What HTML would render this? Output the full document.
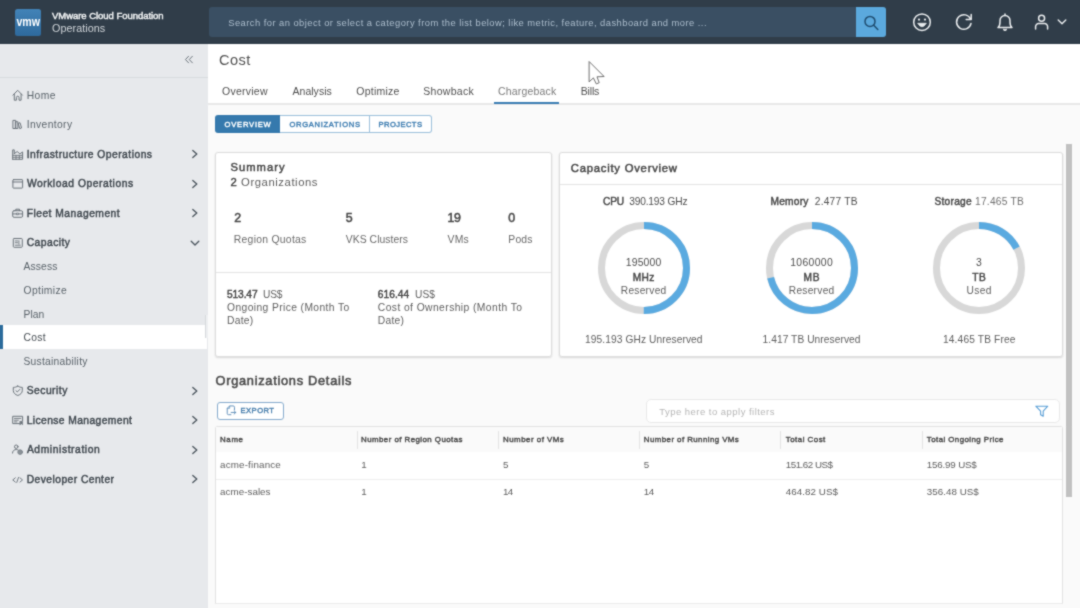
<!DOCTYPE html>
<html lang="en">
<head>
<meta charset="utf-8">
<title>VMware Cloud Foundation Operations - Cost</title>
<style>
*{box-sizing:border-box;margin:0;padding:0}
html,body{width:1080px;height:608px;overflow:hidden;background:#fafafa}
body{font-family:"Liberation Sans",sans-serif;color:#565656;font-size:11px;position:relative}
.t{position:absolute;white-space:nowrap;line-height:20px;height:20px}
.b{font-weight:bold}
.t b{font-weight:normal;-webkit-text-stroke:0.42px currentColor}
.a{position:absolute}
svg{position:absolute;overflow:visible}
#hdr{left:-8px;top:-8px;width:1096px;height:52px;background:#303d49}
#logo{left:15px;top:9px;width:26px;height:26.5px;border-radius:2.5px;background:linear-gradient(180deg,#4283b7 0%,#2e6a9d 100%)}
#search{left:209px;top:7px;width:677px;height:30px;border-radius:3px;background:#3a4f63}
#sbtn{left:856px;top:7px;width:30px;height:30px;border-radius:0 3px 3px 0;background:#5ba9dd}
#side{left:-8px;top:44px;width:216px;height:572px;background:#e7e9ec}
#sideline{left:-8px;top:77px;width:216px;height:1px;background:#d8dbde}
#sel{left:-8px;top:325px;width:215px;height:24px;background:#fff}
#selbar{left:-8px;top:325px;width:10.5px;height:24px;background:#2c6c9c}
#top{left:208px;top:44px;width:880px;height:60px;background:#fff}
#tabline{left:208px;top:103px;width:880px;height:2px;background:#e8e8e8}
#tabsel{left:494px;top:102px;width:65px;height:2px;background:#3a7db3}
.card{position:absolute;background:#fff;border:1px solid #dcdcdc;border-radius:3px;box-shadow:0 1px 2px rgba(0,0,0,.13)}
.hl{position:absolute;height:1px;background:#e4e4e4}
.vl{position:absolute;width:1px;background:#e4e4e4}
#bg1{left:215px;top:115px;width:65.5px;height:18px;background:#3579ad;border-radius:3px 0 0 3px}
#bg2{left:280px;top:115px;width:152px;height:18px;background:#fff;border:1px solid #9cc0db;border-left:0;border-radius:0 3px 3px 0}
#bg3{left:369px;top:115.5px;width:1px;height:17px;background:#9cc0db}
#exp{left:216.5px;top:402px;width:67.5px;height:18px;border:1px solid #86abcd;border-radius:3px;background:#fff}
#filt{left:646px;top:399px;width:413.5px;height:23.5px;border:1px solid #e9e9e9;border-radius:5px;background:#fff}
#tbl{left:215px;top:426px;width:848px;height:178px;border:1px solid #e2e2e2;border-bottom-color:#ececec;border-radius:3px 3px 0 0;background:#fff}
#hand{left:205px;top:315px;width:3px;height:23px;background:#eef0f2;border-left:1px solid #d6d9dc}
#thead{left:216px;top:427px;width:846px;height:24.5px;background:#fafafa}
#scr{left:1066px;top:144px;width:6px;height:353px;background:#c1c1c1}
#track{left:1063px;top:427px;width:25px;height:189px;background:#fafafa}
#wrap{position:absolute;left:0;top:0;width:1080px;height:608px;filter:url(#soft)}
</style>
</head>
<body>
<svg width="0" height="0" style="position:absolute;left:0;top:0"><defs><filter id="soft" x="-2%" y="-2%" width="104%" height="104%" color-interpolation-filters="sRGB"><feConvolveMatrix order="3" kernelMatrix="0.4 1 0.4 1 5 1 0.4 1 0.4" divisor="10.6" edgeMode="duplicate" preserveAlpha="false"/></filter></defs></svg>
<div id="wrap">

<div class="a" id="hdr"></div>
<div class="a" id="logo"></div>
<div class="a" id="search"></div>
<div class="a" id="sbtn"></div>
<!-- header icons -->
<svg style="left:856px;top:7px" width="30" height="30" viewBox="0 0 30 30" fill="none" stroke="#1f4d70" stroke-width="1.5" stroke-linecap="round"><circle cx="14" cy="14.4" r="5"/><path d="M17.7 18.2 L21.8 22.4"/></svg>
<svg style="left:911px;top:11px" width="22" height="22" viewBox="0 0 22 22" fill="none" stroke="#e9ecee" stroke-width="1.5"><circle cx="11" cy="11.2" r="8.3"/><path d="M6.7 12.3 Q11 19.3 15.3 12.3 Z" fill="#e9ecee" stroke-width="0.8" stroke-linejoin="round"/><circle cx="8" cy="8.6" r="1.1" fill="#e9ecee" stroke="none"/><circle cx="14" cy="8.6" r="1.1" fill="#e9ecee" stroke="none"/></svg>
<svg style="left:953px;top:11px" width="22" height="22" viewBox="0 0 22 22" fill="none" stroke="#e9ecee" stroke-width="1.5" stroke-linecap="round" stroke-linejoin="round"><path d="M17.6 8.2 A7.3 7.3 0 1 0 18 12.4"/><path d="M18.2 3.6 V8.6 H13.2"/></svg>
<svg style="left:994px;top:11px" width="22" height="22" viewBox="0 0 22 22" fill="none" stroke="#e9ecee" stroke-width="1.5" stroke-linecap="round" stroke-linejoin="round"><path d="M4 16.6 H18 C16.4 15.4 16 13.6 16 11 V9.6 A5 5 0 0 0 6 9.6 V11 C6 13.6 5.6 15.4 4 16.6 Z"/><path d="M11 3 V4.4"/><path d="M9.8 18.4 A1.3 1.3 0 0 0 12.2 18.4"/></svg>
<svg style="left:1031px;top:11px" width="22" height="22" viewBox="0 0 22 22" fill="none" stroke="#e9ecee" stroke-width="1.5" stroke-linecap="round" stroke-linejoin="round"><circle cx="10.6" cy="7.2" r="3"/><path d="M4.6 18 V15.6 A3 3 0 0 1 7.6 12.6 H13.6 A3 3 0 0 1 16.6 15.6 V18"/></svg>
<svg style="left:1057px;top:18px" width="10" height="8" viewBox="0 0 10 8" fill="none" stroke="#e9ecee" stroke-width="1.4" stroke-linecap="round" stroke-linejoin="round"><path d="M1.2 2 L5 5.8 L8.8 2"/></svg>

<div class="a" id="side"></div>
<div class="a" id="sideline"></div>
<div class="a" id="sel"></div><div class="a" id="selbar"></div>
<svg style="left:183.6px;top:55px" width="10" height="9.1" viewBox="0 0 11 10" fill="none" stroke="#6b747c" stroke-width="1.1" stroke-linecap="round" stroke-linejoin="round"><path d="M5 1.4 L1.6 5 L5 8.6"/><path d="M9.2 1.4 L5.8 5 L9.2 8.6"/></svg>
<svg style="left:190px;top:148.9px" width="10" height="10" viewBox="0 0 10 10" fill="none" stroke="#4a545d" stroke-width="1.3" stroke-linecap="round" stroke-linejoin="round"><path d="M2.8 1.4 L6.8 5 L2.8 8.6"/></svg>
<svg style="left:190px;top:178.8px" width="10" height="10" viewBox="0 0 10 10" fill="none" stroke="#4a545d" stroke-width="1.3" stroke-linecap="round" stroke-linejoin="round"><path d="M2.8 1.4 L6.8 5 L2.8 8.6"/></svg>
<svg style="left:190px;top:208.3px" width="10" height="10" viewBox="0 0 10 10" fill="none" stroke="#4a545d" stroke-width="1.3" stroke-linecap="round" stroke-linejoin="round"><path d="M2.8 1.4 L6.8 5 L2.8 8.6"/></svg>
<svg style="left:190px;top:385.7px" width="10" height="10" viewBox="0 0 10 10" fill="none" stroke="#4a545d" stroke-width="1.3" stroke-linecap="round" stroke-linejoin="round"><path d="M2.8 1.4 L6.8 5 L2.8 8.6"/></svg>
<svg style="left:190px;top:415.0px" width="10" height="10" viewBox="0 0 10 10" fill="none" stroke="#4a545d" stroke-width="1.3" stroke-linecap="round" stroke-linejoin="round"><path d="M2.8 1.4 L6.8 5 L2.8 8.6"/></svg>
<svg style="left:190px;top:444.7px" width="10" height="10" viewBox="0 0 10 10" fill="none" stroke="#4a545d" stroke-width="1.3" stroke-linecap="round" stroke-linejoin="round"><path d="M2.8 1.4 L6.8 5 L2.8 8.6"/></svg>
<svg style="left:190px;top:474.4px" width="10" height="10" viewBox="0 0 10 10" fill="none" stroke="#4a545d" stroke-width="1.3" stroke-linecap="round" stroke-linejoin="round"><path d="M2.8 1.4 L6.8 5 L2.8 8.6"/></svg>
<svg style="left:190px;top:237.6px" width="10" height="10" viewBox="0 0 10 10" fill="none" stroke="#4a545d" stroke-width="1.3" stroke-linecap="round" stroke-linejoin="round"><path d="M1.2 3.2 L5 7 L8.8 3.2"/></svg>
<!--NAVICONS2-->
<svg style="left:0;top:0" width="216" height="500" viewBox="0 0 216 500" fill="none" stroke-linecap="round" stroke-linejoin="round">
<g stroke="#6c747b" stroke-width="1" transform="matrix(1.0000 0 0 0.9706 12.000 89.135)"><path vector-effect="non-scaling-stroke" d="M1 6.2 L5.7 1.2 L10.4 6.2"/><path vector-effect="non-scaling-stroke" d="M2.3 5.2 V11.4 H4.4 V8.6 A1.3 1.3 0 0 1 7 8.6 V11.4 H9.1 V5.2"/></g>
<g stroke="#6c747b" stroke-width="1" transform="matrix(0.8830 0 0 0.9643 12.417 119.436)"><rect vector-effect="non-scaling-stroke" x="1" y="1" width="2.8" height="8.4"/><rect vector-effect="non-scaling-stroke" x="3.8" y="2.4" width="2.4" height="7"/><path vector-effect="non-scaling-stroke" d="M6.9 4.0 L8.6 3.4 L10.4 8.8 L8.7 9.4 Z"/></g>
<g stroke="#6c747b" stroke-width="1" transform="matrix(0.9706 0 0 0.9400 11.729 148.960)"><path vector-effect="non-scaling-stroke" d="M1 11 V1 H2.6 V5 M1 11 H11.2 V3.2 L8.4 5.2 L5.6 2.8 L2.6 5"/><path vector-effect="non-scaling-stroke" d="M1 6.8 H11.2 M1 8.9 H11.2 M4.4 6.8 V11 M7.8 6.8 V11" stroke-width="0.9"/></g>
<g stroke="#6c747b" stroke-width="1" transform="matrix(0.9510 0 0 0.9884 11.949 178.612)"><rect vector-effect="non-scaling-stroke" x="1" y="1" width="10.2" height="8.6" rx="0.6"/><path vector-effect="non-scaling-stroke" d="M1 3.4 H11.2"/></g>
<g stroke="#6c747b" stroke-width="1" transform="matrix(0.9706 0 0 0.9419 11.729 207.881)"><rect vector-effect="non-scaling-stroke" x="1" y="3" width="10.2" height="7" rx="1.4"/><path vector-effect="non-scaling-stroke" d="M4.2 3 V1.4 H8 V3"/><path vector-effect="non-scaling-stroke" d="M1 6.4 H4.8 M7.4 6.4 H11.2"/><rect vector-effect="non-scaling-stroke" x="5.2" y="5.6" width="1.8" height="1.6" stroke-width="0.8"/></g>
<g stroke="#6c747b" stroke-width="1" transform="matrix(1.0000 0 0 0.9565 12.300 237.543)"><rect vector-effect="non-scaling-stroke" x="1" y="1" width="9" height="9.2" rx="0.9"/><path vector-effect="non-scaling-stroke" d="M3 3.5 H5.2 M3 5.4 H5.2 M6.6 3.2 V6.8 M3 8 H8" stroke-width="0.9"/></g>
<g stroke="#6c747b" stroke-width="1" transform="matrix(1.0000 0 0 0.9307 12.100 385.262)"><path vector-effect="non-scaling-stroke" d="M5.7 0.9 C7 1.9 8.6 2.3 10.2 2.3 V5.6 C10.2 8.2 8.4 10 5.7 11 C3 10 1.2 8.2 1.2 5.6 V2.3 C2.8 2.3 4.4 1.9 5.7 0.9 Z"/><path vector-effect="non-scaling-stroke" d="M3.8 5.8 L5.2 7.2 L7.8 4.4"/></g>
<g stroke="#6c747b" stroke-width="1" transform="matrix(0.9706 0 0 0.9333 11.729 415.367)"><path vector-effect="non-scaling-stroke" d="M8 8.8 H1 V1 H11.2 V5.6"/><path vector-effect="non-scaling-stroke" d="M2.8 3.3 H9.4 M2.8 5.2 H6.8 M2.8 7 H5.4" stroke-width="0.9"/><path vector-effect="non-scaling-stroke" d="M8.6 6.4 H11.2 V10 L9.9 8.9 L8.6 10 Z" fill="#6c747b" stroke-width="0.6"/></g>
<g stroke="#6c747b" stroke-width="1" transform="matrix(0.9804 0 0 0.9495 11.520 443.956)"><circle vector-effect="non-scaling-stroke" cx="4.8" cy="2.9" r="1.8"/><path vector-effect="non-scaling-stroke" d="M1 9.6 C1 7.2 2.8 5.9 4.8 5.9 C5.6 5.9 6.2 6.1 6.8 6.4"/><circle vector-effect="non-scaling-stroke" cx="8.8" cy="8.6" r="2.4" fill="#8b9298" stroke="#7d858c"/></g>
<g stroke="#6c747b" stroke-width="0.95" transform="matrix(0.9750 0 0 0.9167 11.800 476.742)"><path vector-effect="non-scaling-stroke" d="M3.6 1.2 L1 3.5 L3.6 5.8 M8.4 1.2 L11 3.5 L8.4 5.8 M6.9 0.8 L5.1 6.2"/></g>
</svg>
<!--/NAVICONS2-->
<div class="a" id="hand"></div>
<div class="a" id="top"></div>
<div class="a" id="tabline"></div>
<div class="a" id="tabsel"></div>
<div class="a" id="bg1"></div><div class="a" id="bg2"></div><div class="a" id="bg3"></div>
<div class="card" style="left:215px;top:152px;width:337px;height:205px"></div>
<div class="hl" style="left:216px;top:272px;width:335px"></div>
<div class="card" style="left:559px;top:152px;width:504px;height:205px"></div>
<div class="hl" style="left:560px;top:184px;width:502px"></div>
<svg style="left:593.5px;top:217.5px" width="100" height="100" viewBox="-50 -50 100 100" fill="none"><circle r="42.5" stroke="#d8d8d8" stroke-width="7.0"/><circle r="42.5" stroke="#5aaae0" stroke-width="7.0" stroke-dasharray="133.52 267.04" transform="rotate(-90)"/></svg>
<svg style="left:761.5px;top:217.5px" width="100" height="100" viewBox="-50 -50 100 100" fill="none"><circle r="42.5" stroke="#d8d8d8" stroke-width="7.0"/><circle r="42.5" stroke="#5aaae0" stroke-width="7.0" stroke-dasharray="190.13 267.04" transform="rotate(-90)"/></svg>
<svg style="left:929.0px;top:217.5px" width="100" height="100" viewBox="-50 -50 100 100" fill="none"><circle r="42.5" stroke="#d8d8d8" stroke-width="7.0"/><circle r="42.5" stroke="#5aaae0" stroke-width="7.0" stroke-dasharray="45.93 267.04" transform="rotate(-90)"/></svg>
<div class="a" id="exp"></div>
<div class="a" id="filt"></div>
<svg style="left:226.2px;top:404.7px" width="11.4" height="11.2" viewBox="0 0 12 12" fill="none" stroke="#5b8cb8" stroke-width="1" stroke-linecap="round" stroke-linejoin="round"><path d="M5.2 10.4 H2.6 A1.4 1.4 0 0 1 1.2 9 V3.6 L3.8 1 H7.6 A1.4 1.4 0 0 1 9 2.4 V5.2"/><path d="M1.4 3.6 H3.8 V1.2" stroke-width="0.8"/><path d="M5.4 8 H10.4 M8.6 6.2 L10.4 8 L8.6 9.8"/></svg>
<svg style="left:1034px;top:404px" width="16" height="14" viewBox="0 0 16 14" fill="none" stroke="#5a9fd6" stroke-width="1.1" stroke-linejoin="round" stroke-linecap="round"><path d="M1.8 2.2 H13.8 L9.2 7.2 V12.2 L6.6 10.8 V7.2 Z"/></svg>
<div class="a" id="tbl"></div>
<div class="a" id="thead"></div>
<div class="hl" style="left:216px;top:478.5px;width:846px;background:#eeeeee"></div>
<div class="vl" style="left:356.5px;top:430.5px;height:18px"></div>
<div class="vl" style="left:498px;top:430.5px;height:18px"></div>
<div class="vl" style="left:638.5px;top:430.5px;height:18px"></div>
<div class="vl" style="left:780px;top:430.5px;height:18px"></div>
<div class="vl" style="left:921.5px;top:430.5px;height:18px"></div>
<div class="a" id="track"></div>
<div class="a" id="scr"></div>
<svg style="left:0;top:0" width="1080" height="608" viewBox="0 0 1080 608"><path d="M589.1 61.5 L589.1 81.9 L593.4 77.9 L596.3 83.9 L599.2 82.7 L597 76.8 L604.1 76.5 Z" fill="#ffffff" stroke="#707070" stroke-width="1" stroke-linejoin="round"/></svg>

<div class="t b" id="t0" style="left:16.40px;top:11.120px;font-size:10.60px;color:#ffffff;letter-spacing:-0.031px;transform:scaleY(1.22);transform-origin:0 50%;">vmw</div>
<div class="t" id="t1" style="left:52.00px;top:6.000px;font-size:9.50px;color:#f4f6f7;letter-spacing:-0.040px;-webkit-text-stroke:0.42px #f4f6f7;">VMware Cloud Foundation</div>
<div class="t" id="t2" style="left:52.00px;top:18.000px;font-size:10.80px;color:#d0d5d9;letter-spacing:0.041px;">Operations</div>
<div class="t" id="t3" style="left:228.20px;top:13.000px;font-size:9.40px;color:#adbecd;letter-spacing:0.452px;">Search for an object or select a category from the list below; like metric, feature, dashboard and more ...</div>
<div class="t" id="t4" style="left:26.70px;top:86.000px;font-size:10.30px;color:#5a636a;letter-spacing:0.410px;">Home</div>
<div class="t" id="t5" style="left:26.70px;top:115.000px;font-size:10.30px;color:#5a636a;letter-spacing:0.380px;">Inventory</div>
<div class="t" id="t6" style="left:26.70px;top:145.000px;font-size:10.30px;color:#3f474e;letter-spacing:0.475px;-webkit-text-stroke:0.43px #3f474e;">Infrastructure Operations</div>
<div class="t" id="t7" style="left:26.90px;top:174.000px;font-size:10.30px;color:#3f474e;letter-spacing:0.536px;-webkit-text-stroke:0.43px #3f474e;">Workload Operations</div>
<div class="t" id="t8" style="left:26.70px;top:204.000px;font-size:10.30px;color:#3f474e;letter-spacing:0.476px;-webkit-text-stroke:0.43px #3f474e;">Fleet Management</div>
<div class="t" id="t9" style="left:26.70px;top:233.000px;font-size:10.30px;color:#3f474e;letter-spacing:0.462px;-webkit-text-stroke:0.43px #3f474e;">Capacity</div>
<div class="t" id="t10" style="left:23.50px;top:257.000px;font-size:10.30px;color:#5a636a;letter-spacing:0.139px;">Assess</div>
<div class="t" id="t11" style="left:23.50px;top:281.000px;font-size:10.30px;color:#5a636a;letter-spacing:0.368px;">Optimize</div>
<div class="t" id="t12" style="left:23.50px;top:305.000px;font-size:10.30px;color:#5a636a;letter-spacing:0.030px;">Plan</div>
<div class="t" id="t13" style="left:23.50px;top:328.000px;font-size:10.30px;color:#454c52;letter-spacing:0.304px;">Cost</div>
<div class="t" id="t14" style="left:23.50px;top:352.000px;font-size:10.30px;color:#5a636a;letter-spacing:0.248px;">Sustainability</div>
<div class="t" id="t15" style="left:26.70px;top:381.000px;font-size:10.30px;color:#3f474e;letter-spacing:0.485px;-webkit-text-stroke:0.43px #3f474e;">Security</div>
<div class="t" id="t16" style="left:26.70px;top:411.000px;font-size:10.30px;color:#3f474e;letter-spacing:0.396px;-webkit-text-stroke:0.43px #3f474e;">License Management</div>
<div class="t" id="t17" style="left:26.90px;top:440.000px;font-size:10.30px;color:#3f474e;letter-spacing:0.588px;-webkit-text-stroke:0.43px #3f474e;">Administration</div>
<div class="t" id="t18" style="left:26.70px;top:470.000px;font-size:10.30px;color:#3f474e;letter-spacing:0.440px;-webkit-text-stroke:0.43px #3f474e;">Developer Center</div>
<div class="t" id="t19" style="left:219.00px;top:50.000px;font-size:14.60px;color:#505050;letter-spacing:0.395px;">Cost</div>
<div class="t" id="t20" style="left:222.00px;top:81.000px;font-size:10.50px;color:#4f4f4f;letter-spacing:0.248px;">Overview</div>
<div class="t" id="t21" style="left:292.50px;top:81.000px;font-size:10.50px;color:#4f4f4f;letter-spacing:0.027px;">Analysis</div>
<div class="t" id="t22" style="left:356.30px;top:81.000px;font-size:10.50px;color:#4f4f4f;letter-spacing:0.223px;">Optimize</div>
<div class="t" id="t23" style="left:423.30px;top:81.000px;font-size:10.50px;color:#4f4f4f;letter-spacing:0.292px;">Showback</div>
<div class="t" id="t24" style="left:498.00px;top:81.000px;font-size:10.50px;color:#7a7a7a;letter-spacing:0.186px;">Chargeback</div>
<div class="t" id="t25" style="left:580.80px;top:81.000px;font-size:10.50px;color:#4f4f4f;letter-spacing:-0.191px;">Bills</div>
<div class="t" id="t26" style="left:224.50px;top:115.000px;font-size:7.60px;color:#ffffff;letter-spacing:0.786px;-webkit-text-stroke:0.42px #ffffff;">OVERVIEW</div>
<div class="t" id="t27" style="left:289.50px;top:115.000px;font-size:7.60px;color:#417fb2;letter-spacing:0.682px;-webkit-text-stroke:0.42px #417fb2;">ORGANIZATIONS</div>
<div class="t" id="t28" style="left:378.50px;top:115.000px;font-size:7.60px;color:#417fb2;letter-spacing:0.426px;-webkit-text-stroke:0.42px #417fb2;">PROJECTS</div>
<div class="t" id="t29" style="left:230.50px;top:157.000px;font-size:11.20px;color:#464646;letter-spacing:1.021px;-webkit-text-stroke:0.47px #464646;">Summary</div>
<div class="t" id="t30" style="left:230.50px;top:172.000px;font-size:11.30px;color:#5e5e5e;letter-spacing:0.561px;"><b style="color:#464646">2</b> Organizations</div>
<div class="t" id="t31" style="left:234.30px;top:208.000px;font-size:12.40px;color:#484848;-webkit-text-stroke:0.52px #484848;">2</div>
<div class="t" id="t32" style="left:345.80px;top:208.000px;font-size:12.40px;color:#484848;-webkit-text-stroke:0.52px #484848;">5</div>
<div class="t" id="t33" style="left:447.50px;top:208.000px;font-size:12.40px;color:#484848;letter-spacing:-0.497px;-webkit-text-stroke:0.52px #484848;">19</div>
<div class="t" id="t34" style="left:508.30px;top:208.000px;font-size:12.40px;color:#484848;-webkit-text-stroke:0.52px #484848;">0</div>
<div class="t" id="t35" style="left:233.80px;top:230.000px;font-size:10.40px;color:#6a6a6a;letter-spacing:0.264px;">Region Quotas</div>
<div class="t" id="t36" style="left:345.80px;top:230.000px;font-size:10.40px;color:#6a6a6a;letter-spacing:0.037px;">VKS Clusters</div>
<div class="t" id="t37" style="left:447.50px;top:230.000px;font-size:10.40px;color:#6a6a6a;letter-spacing:0.259px;">VMs</div>
<div class="t" id="t38" style="left:508.30px;top:230.000px;font-size:10.40px;color:#6a6a6a;letter-spacing:0.171px;">Pods</div>
<div class="t" id="t39" style="left:227.00px;top:285.000px;font-size:10.20px;color:#5e5e5e;letter-spacing:-0.116px;"><b style="color:#464646">513.47</b>&nbsp; US$</div>
<div class="t" id="t40" style="left:227.00px;top:298.000px;font-size:10.30px;color:#606060;letter-spacing:0.390px;">Ongoing Price (Month To</div>
<div class="t" id="t41" style="left:227.00px;top:311.000px;font-size:10.30px;color:#606060;letter-spacing:0.278px;">Date)</div>
<div class="t" id="t42" style="left:377.80px;top:285.000px;font-size:10.20px;color:#5e5e5e;letter-spacing:0.054px;"><b style="color:#464646">616.44</b>&nbsp; US$</div>
<div class="t" id="t43" style="left:377.80px;top:298.000px;font-size:10.30px;color:#606060;letter-spacing:0.425px;">Cost of Ownership (Month To</div>
<div class="t" id="t44" style="left:377.80px;top:311.000px;font-size:10.30px;color:#606060;letter-spacing:0.253px;">Date)</div>
<div class="t" id="t45" style="left:570.80px;top:158.000px;font-size:11.30px;color:#464646;letter-spacing:0.752px;-webkit-text-stroke:0.47px #464646;">Capacity Overview</div>
<div class="t" id="t46" style="left:603.00px;top:192.000px;font-size:10.20px;color:#4e4e4e;letter-spacing:-0.181px;"><b style="color:#464646">CPU</b>&nbsp; 390.193 GHz</div>
<div class="t" id="t47" style="left:770.50px;top:192.000px;font-size:10.20px;color:#4e4e4e;letter-spacing:0.225px;"><b style="color:#464646">Memory</b>&nbsp; 2.477 TB</div>
<div class="t" id="t48" style="left:934.50px;top:192.000px;font-size:10.20px;color:#707070;letter-spacing:0.247px;"><b style="color:#464646">Storage</b> 17.465 TB</div>
<div class="t" id="t49" style="left:625.75px;top:253.000px;font-size:10.40px;color:#4e4e4e;letter-spacing:0.163px;">195000</div>
<div class="t" id="t50" style="left:632.75px;top:268.000px;font-size:10.20px;color:#464646;letter-spacing:0.281px;-webkit-text-stroke:0.43px #464646;">MHz</div>
<div class="t" id="t51" style="left:620.75px;top:281.000px;font-size:10.20px;color:#606060;letter-spacing:0.270px;">Reserved</div>
<div class="t" id="t52" style="left:790.25px;top:253.000px;font-size:10.40px;color:#4e4e4e;letter-spacing:0.341px;">1060000</div>
<div class="t" id="t53" style="left:803.50px;top:268.000px;font-size:10.20px;color:#464646;letter-spacing:0.719px;-webkit-text-stroke:0.43px #464646;">MB</div>
<div class="t" id="t54" style="left:788.75px;top:281.000px;font-size:10.20px;color:#606060;letter-spacing:0.270px;">Reserved</div>
<div class="t" id="t55" style="left:976.00px;top:253.000px;font-size:10.40px;color:#4e4e4e;">3</div>
<div class="t" id="t56" style="left:972.25px;top:268.000px;font-size:10.20px;color:#464646;letter-spacing:0.469px;-webkit-text-stroke:0.43px #464646;">TB</div>
<div class="t" id="t57" style="left:966.50px;top:281.000px;font-size:10.20px;color:#606060;letter-spacing:0.401px;">Used</div>
<div class="t" id="t58" style="left:585.00px;top:330.000px;font-size:10.20px;color:#5e5e5e;letter-spacing:0.094px;">195.193 GHz Unreserved</div>
<div class="t" id="t59" style="left:762.50px;top:330.000px;font-size:10.20px;color:#5e5e5e;letter-spacing:0.075px;">1.417 TB Unreserved</div>
<div class="t" id="t60" style="left:943.00px;top:330.000px;font-size:10.20px;color:#5e5e5e;letter-spacing:0.145px;">14.465 TB Free</div>
<div class="t" id="t61" style="left:215.50px;top:371.000px;font-size:12.80px;color:#4a4a4a;letter-spacing:0.718px;-webkit-text-stroke:0.54px #4a4a4a;">Organizations Details</div>
<div class="t" id="t62" style="left:240.50px;top:401.000px;font-size:7.60px;color:#4b80ae;letter-spacing:0.481px;-webkit-text-stroke:0.42px #4b80ae;">EXPORT</div>
<div class="t" id="t63" style="left:659.30px;top:402.000px;font-size:9.50px;color:#b6b6b6;letter-spacing:0.468px;">Type here to apply filters</div>
<div class="t" id="t64" style="left:220.00px;top:430.000px;font-size:7.90px;color:#4a4a4a;letter-spacing:0.646px;-webkit-text-stroke:0.42px #4a4a4a;">Name</div>
<div class="t" id="t65" style="left:361.00px;top:430.000px;font-size:7.90px;color:#4a4a4a;letter-spacing:0.447px;-webkit-text-stroke:0.42px #4a4a4a;">Number of Region Quotas</div>
<div class="t" id="t66" style="left:503.00px;top:430.000px;font-size:7.90px;color:#4a4a4a;letter-spacing:0.499px;-webkit-text-stroke:0.42px #4a4a4a;">Number of VMs</div>
<div class="t" id="t67" style="left:643.80px;top:430.000px;font-size:7.90px;color:#4a4a4a;letter-spacing:0.430px;-webkit-text-stroke:0.42px #4a4a4a;">Number of Running VMs</div>
<div class="t" id="t68" style="left:785.80px;top:430.000px;font-size:7.90px;color:#4a4a4a;letter-spacing:0.490px;-webkit-text-stroke:0.42px #4a4a4a;">Total Cost</div>
<div class="t" id="t69" style="left:926.80px;top:430.000px;font-size:7.90px;color:#4a4a4a;letter-spacing:0.435px;-webkit-text-stroke:0.42px #4a4a4a;">Total Ongoing Price</div>
<div class="t" id="t70" style="left:220.00px;top:455.000px;font-size:9.80px;color:#5e5e5e;letter-spacing:0.181px;">acme-finance</div>
<div class="t" id="t71" style="left:361.30px;top:455.000px;font-size:9.80px;color:#5e5e5e;">1</div>
<div class="t" id="t72" style="left:503.00px;top:455.000px;font-size:9.80px;color:#5e5e5e;">5</div>
<div class="t" id="t73" style="left:643.80px;top:455.000px;font-size:9.80px;color:#5e5e5e;">5</div>
<div class="t" id="t74" style="left:785.80px;top:455.000px;font-size:9.80px;color:#5e5e5e;letter-spacing:-0.506px;">151.62 US$</div>
<div class="t" id="t75" style="left:926.80px;top:455.000px;font-size:9.80px;color:#5e5e5e;letter-spacing:-0.194px;">156.99 US$</div>
<div class="t" id="t76" style="left:220.00px;top:482.000px;font-size:9.80px;color:#5e5e5e;letter-spacing:0.045px;">acme-sales</div>
<div class="t" id="t77" style="left:361.30px;top:482.000px;font-size:9.80px;color:#5e5e5e;">1</div>
<div class="t" id="t78" style="left:503.00px;top:482.000px;font-size:9.80px;color:#5e5e5e;letter-spacing:-0.600px;">14</div>
<div class="t" id="t79" style="left:643.80px;top:482.000px;font-size:9.80px;color:#5e5e5e;letter-spacing:-0.600px;">14</div>
<div class="t" id="t80" style="left:785.80px;top:482.000px;font-size:9.80px;color:#5e5e5e;letter-spacing:0.050px;">464.82 US$</div>
<div class="t" id="t81" style="left:926.80px;top:482.000px;font-size:9.80px;color:#5e5e5e;letter-spacing:0.028px;">356.48 US$</div>
</div>
</body>
</html>
